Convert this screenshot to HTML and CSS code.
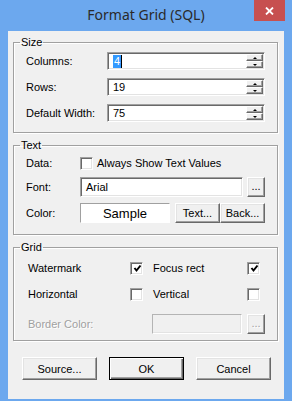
FILE: index.html
```html
<!DOCTYPE html>
<html lang="en">
<head>
  <meta charset="UTF-8">
  <meta name="viewport" content="width=device-width, initial-scale=1.0">
  <title>Format Grid (SQL)</title>
  <link rel="stylesheet" href="styles.css">
</head>
<body>

  <div class="window">
    <div class="titlebar">
      <span></span>
      <span class="title">Format Grid (SQL)</span>
      <span class="close">
        <svg width="9" height="8" viewBox="0 0 9 8"><path d="M1 0.5 L8 7.5 M8 0.5 L1 7.5" stroke="#fff" stroke-width="1.8" fill="none"/></svg>
      </span>
    </div>

    <div class="client">

      <!-- Size -->
      <fieldset class="group group-size">
        <legend>Size</legend>
        <div class="row">
          <span class="lbl lbl-size">Columns:</span>
          <div class="spin-input">
            <span class="value"><span class="selected">4</span><span class="caret"></span></span>
            <span class="spin"><span class="spin-btn up"></span><span class="spin-btn down"></span></span>
          </div>
        </div>
        <div class="row">
          <span class="lbl lbl-size">Rows:</span>
          <div class="spin-input">
            <span class="value">19</span>
            <span class="spin"><span class="spin-btn up"></span><span class="spin-btn down"></span></span>
          </div>
        </div>
        <div class="row">
          <span class="lbl lbl-size">Default Width:</span>
          <div class="spin-input">
            <span class="value">75</span>
            <span class="spin"><span class="spin-btn up"></span><span class="spin-btn down"></span></span>
          </div>
        </div>
      </fieldset>

      <!-- Text -->
      <fieldset class="group group-text">
        <legend>Text</legend>
        <div class="row row-data">
          <span class="lbl lbl-text">Data:</span>
          <span class="check"></span>
          <span class="check-label">Always Show Text Values</span>
        </div>
        <div class="row row-font">
          <span class="lbl lbl-text">Font:</span>
          <span class="textbox font-box">Arial</span>
          <span class="btn3d dots">...</span>
        </div>
        <div class="row row-color">
          <span class="lbl lbl-text">Color:</span>
          <span class="sample">Sample</span>
          <span class="btn3d small-btn">Text...</span>
          <span class="btn3d small-btn">Back...</span>
        </div>
      </fieldset>

      <!-- Grid -->
      <fieldset class="group group-grid">
        <legend>Grid</legend>
        <div class="row grid-row">
          <span>Watermark</span>
          <span class="check"><svg width="9" height="9" viewBox="0 0 9 9"><path d="M1.5 4 L3.5 6.5 L7.5 1.5" stroke="#000" stroke-width="2" fill="none"/></svg></span>
          <span></span>
          <span>Focus rect</span>
          <span class="check"><svg width="9" height="9" viewBox="0 0 9 9"><path d="M1.5 4 L3.5 6.5 L7.5 1.5" stroke="#000" stroke-width="2" fill="none"/></svg></span>
        </div>
        <div class="row grid-row row-second">
          <span>Horizontal</span>
          <span class="check"></span>
          <span></span>
          <span>Vertical</span>
          <span class="check"></span>
        </div>
        <div class="row row-border">
          <span class="lbl lbl-disabled">Border Color:</span>
          <span class="textbox-disabled"></span>
          <span class="btn3d dots disabled">...</span>
        </div>
      </fieldset>

      <div class="buttons">
        <span class="btn3d push">Source...</span>
        <span class="btn3d push default">OK</span>
        <span class="btn3d push">Cancel</span>
      </div>

    </div>
  </div>

</body>
</html>
```

FILE: styles.css
```css
body {
  margin: 0;
  padding: 0;
  background-color: #6ca8ee;
  font-family: "Liberation Sans", Arial, sans-serif;
  font-size: 11px;
  color: #000;
}

.window {
  width: 292px;
  height: 401px;
  background-color: #6ca8ee;
  overflow: hidden;
}

/* Baslik cubugu */
.titlebar {
  height: 31px;
  display: grid;
  grid-template-columns: 1fr auto 1fr;
  align-items: start;
}

.title {
  font-family: "Noto Sans", sans-serif;
  font-size: 14px;
  line-height: 30px;
  color: #2a2a2a;
}

.close {
  justify-self: end;
  margin-right: 7px;
  width: 31px;
  height: 21px;
  background-color: #c75050;
  display: flex;
  align-items: center;
  justify-content: center;
}

.client {
  margin: 0 8px;
  height: 368px;
  background-color: #f0f0f0;
  overflow: hidden;
  padding-top: 4px;
  box-sizing: border-box;
}

/* Grup kutulari */
.group {
  margin: 5px 6px 0 5px;
  padding: 3px 12px 10px;
  border: 1px solid #a0a0a0;
  box-shadow: inset 1px 1px 0 #fff, 1px 1px 0 #fff;
  min-width: 0;
}

.group-size {
  margin-top: 0;
}

.group-text {
  padding-bottom: 11px;
}

.group-grid {
  padding-top: 4px;
  padding-bottom: 6px;
}

legend {
  margin-left: -6px;
  padding: 0 1px;
  line-height: 14px;
}

.row {
  display: flex;
  align-items: center;
}

.lbl {
  flex: none;
}

.lbl-size {
  width: 81px;
}

.lbl-text {
  width: 54px;
}

/* Sayac kutulari */
.group-size .row {
  height: 18px;
}

.group-size .row + .row {
  margin-top: 8px;
}

.spin-input {
  width: 158px;
  height: 18px;
  box-sizing: border-box;
  padding: 1px;
  border: 1px solid;
  border-color: #a0a0a0 #fff #fff #a0a0a0;
  box-shadow: inset 1px 1px 0 #696969, inset -1px -1px 0 #e3e3e3;
  background-color: #fff;
  display: flex;
}

.value {
  flex: 1;
  display: flex;
  align-items: center;
  padding-left: 4px;
  line-height: 13px;
}

.selected {
  background-color: #3399ff;
  color: #fff;
  padding: 0 1px;
}

.caret {
  width: 1px;
  height: 13px;
  background-color: #000;
}

.spin {
  width: 17px;
  display: flex;
  flex-direction: column;
}

.spin-btn {
  flex: 1;
  box-sizing: border-box;
  background-color: #f0f0f0;
  border: 1px solid;
  border-color: #fff #696969 #696969 #fff;
  box-shadow: inset -1px -1px 0 #a0a0a0;
  display: flex;
  align-items: center;
  justify-content: center;
}

.spin-btn::after {
  content: "";
  border-left: 2px solid transparent;
  border-right: 2px solid transparent;
}

.spin-btn.up::after {
  border-bottom: 2px solid #000;
}

.spin-btn.down::after {
  border-top: 2px solid #000;
}

/* Onay kutulari */
.check {
  width: 13px;
  height: 13px;
  box-sizing: border-box;
  border: 1px solid;
  border-color: #a0a0a0 #fff #fff #a0a0a0;
  box-shadow: inset 1px 1px 0 #696969, inset -1px -1px 0 #e3e3e3;
  background-color: #fff;
  display: flex;
  align-items: center;
  justify-content: center;
  flex: none;
}

.check svg {
  margin: 1px 0 0 1px;
}

.check-label {
  margin-left: 4px;
}

/* Metin grubu */
.row-data {
  height: 16px;
}

.row-font,
.row-color {
  height: 20px;
  margin-top: 6px;
}

.textbox {
  height: 20px;
  box-sizing: border-box;
  border: 1px solid;
  border-color: #a0a0a0 #fff #fff #a0a0a0;
  box-shadow: inset 1px 1px 0 #696969, inset -1px -1px 0 #e3e3e3;
  background-color: #fff;
  padding-left: 5px;
  display: flex;
  align-items: center;
}

.font-box {
  width: 163px;
}

.btn3d {
  box-sizing: border-box;
  background-color: #f0f0f0;
  border: 1px solid;
  border-color: #fff #696969 #696969 #fff;
  box-shadow: inset -1px -1px 0 #a0a0a0, inset 1px 1px 0 #e3e3e3;
  display: flex;
  align-items: center;
  justify-content: center;
  flex: none;
}

.dots {
  width: 18px;
  height: 20px;
  margin-left: 4px;
  padding-bottom: 2px;
}

.sample {
  width: 90px;
  height: 20px;
  box-sizing: border-box;
  border: 1px solid;
  border-color: #a0a0a0 #fff #fff #a0a0a0;
  background-color: #fff;
  font-size: 13px;
  display: flex;
  align-items: center;
  justify-content: center;
}

.small-btn {
  width: 45px;
  height: 20px;
}

.sample + .small-btn {
  margin-left: 5px;
}

/* Izgara grubu */
.grid-row {
  display: grid;
  grid-template-columns: 102px 13px 10px 94px 13px;
  height: 20px;
  padding-left: 2px;
}

.row-second {
  margin-top: 6px;
}

.row-border {
  height: 20px;
  margin-top: 10px;
  padding-left: 2px;
}

.lbl-disabled {
  width: 124px;
  color: #a0a0a0;
  text-shadow: 1px 1px 0 #fff;
}

.textbox-disabled {
  width: 90px;
  height: 20px;
  box-sizing: border-box;
  border: 1px solid;
  border-color: #b4b4b4 #fff #fff #b4b4b4;
  box-shadow: inset -1px -1px 0 #e3e3e3;
  background-color: #f0f0f0;
}

.row-border .dots {
  margin-left: 5px;
}

.disabled {
  color: #a0a0a0;
  text-shadow: 1px 1px 0 #fff;
}

/* Alt dugmeler */
.buttons {
  display: flex;
  gap: 12px;
  padding-left: 14px;
  margin-top: 16px;
}

.push {
  width: 75px;
  height: 23px;
}

.push.default {
  width: 75px;
  border-color: #000;
  box-shadow: inset 1px 1px 0 #fff, inset -1px -1px 0 #696969, inset -2px -2px 0 #a0a0a0;
}
```
